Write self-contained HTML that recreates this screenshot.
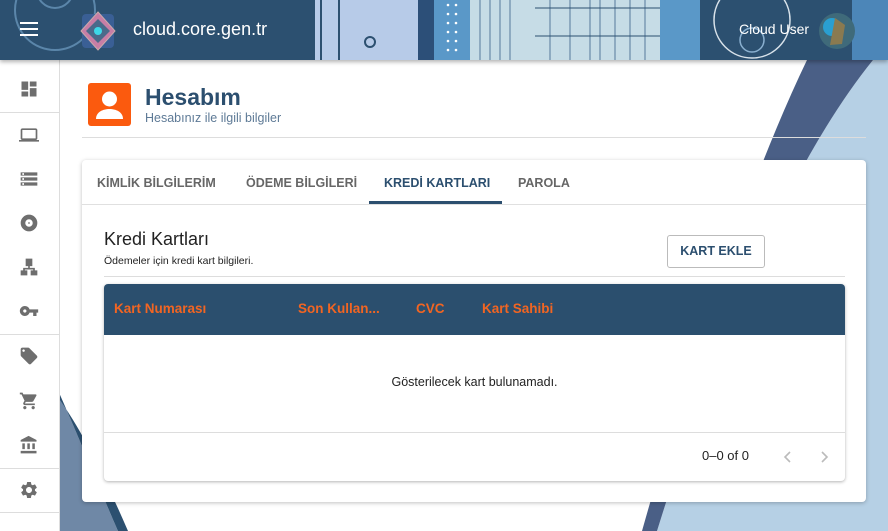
<!DOCTYPE html>
<html><head><meta charset="utf-8"><style>
*{box-sizing:border-box;margin:0;padding:0}
body{width:888px;height:531px;overflow:hidden;font-family:"Liberation Sans",sans-serif;background:#fff;position:relative}
.hdr{position:absolute;left:0;top:0;width:888px;height:60px;background:#2c5070;overflow:hidden;box-shadow:0 2px 4px rgba(0,0,0,.3);z-index:5}
.side{position:absolute;left:0;top:60px;width:60px;height:471px;background:#fff;border-right:1px solid #ddd;z-index:3}
.side svg{position:absolute;left:19px;width:20px;height:20px;fill:#6e6e6e}
.div{position:absolute;left:0;width:60px;height:1px;background:#ddd}
.ab{position:absolute}
.tab{position:absolute;top:16px;font-size:12.5px;font-weight:bold;color:#666}
</style></head><body>
<svg class="ab" style="left:0;top:0" width="888" height="531">
<path d="M873 60 L888 60 L888 531 L657 531 Q760 200 873 60Z" fill="#b6d0e5"/>
<path d="M807 60 L873 60 Q760 200 657 531 L642 531 Q730 220 807 60Z" fill="#4a5f86"/>
<path d="M60 395 C80 440 100 490 118 531 L60 531Z" fill="#6f88a6"/>
<path d="M60 395 C80 440 100 490 118 531 L128 531 C110 490 88 440 60 400Z" fill="#2c5070"/>
</svg>
<div class="hdr">
<svg width="888" height="60" style="position:absolute;left:0;top:0">
<circle cx="55" cy="10" r="40" fill="none" stroke="#5b86aa" stroke-width="2"/>
<circle cx="55" cy="-10" r="18" fill="none" stroke="#5b86aa" stroke-width="2"/>
<rect x="315" y="0" width="105" height="60" fill="#b7cbe8"/>
<rect x="320" y="0" width="2" height="60" fill="#2c5070"/>
<rect x="338" y="0" width="2" height="60" fill="#2c5070"/>
<rect x="418" y="0" width="16" height="60" fill="#2c4f78"/>
<circle cx="370" cy="42" r="5" fill="none" stroke="#2c5070" stroke-width="2"/>
<rect x="434" y="0" width="36" height="60" fill="#5a98c8"/>
<g fill="#fff"><circle cx="448" cy="5" r="1.3"/><circle cx="448" cy="14" r="1.3"/><circle cx="448" cy="23" r="1.3"/><circle cx="448" cy="32" r="1.3"/><circle cx="448" cy="41" r="1.3"/><circle cx="448" cy="50" r="1.3"/><circle cx="456" cy="5" r="1.3"/><circle cx="456" cy="14" r="1.3"/><circle cx="456" cy="23" r="1.3"/><circle cx="456" cy="32" r="1.3"/><circle cx="456" cy="41" r="1.3"/><circle cx="456" cy="50" r="1.3"/></g>
<rect x="470" y="0" width="190" height="60" fill="#c6dce6"/>
<g stroke="#6a8aa8" stroke-width="1.2"><path d="M480 0V60M490 0V60M500 0V60M510 0V60M550 0V60M570 0V60M590 0V60M600 0V60M615 0V60M630 0V60M645 0V60"/></g>
<path d="M535 8H665M535 36H665" stroke="#2c5070"/>
<rect x="660" y="0" width="40" height="60" fill="#5a98c8"/>
<rect x="700" y="0" width="188" height="60" fill="#2c5070"/>
<circle cx="752" cy="20" r="38" fill="none" stroke="#d8e2ea" stroke-width="1.5"/>
<circle cx="752" cy="40" r="12" fill="none" stroke="#8ab0d0" stroke-width="1.5"/>
<rect x="852" y="0" width="36" height="60" fill="#4c86b8"/>
<circle cx="837" cy="31" r="18" fill="#3f6a7a"/>
<circle cx="832" cy="27" r="9" fill="#2a9fd0"/>
<path d="M835 18 L845 25 L842 44 L830 45Z" fill="#8a7a50"/>
</svg>
<svg class="ab" style="left:20px;top:22px" width="18" height="14"><path d="M0 1h18M0 7h18M0 13h18" stroke="#fff" stroke-width="2"/></svg>
<svg class="ab" style="left:80px;top:11px" width="36" height="40"><rect x="2" y="3" width="32" height="34" rx="4" fill="#3a5f95"/><path d="M18 1 L35 20 L18 39 L1 20Z" fill="#c87ea6" stroke="#caa" stroke-width="1"/><path d="M18 8 L30 20 L18 32 L6 20Z" fill="#4a6a8a"/><circle cx="18" cy="20" r="4" fill="#3dd8e8"/></svg>
<div class="ab" style="left:133px;top:19px;color:#fff;font-size:18px">cloud.core.gen.tr</div>
<div class="ab" style="left:739px;top:21px;color:#fff;font-size:14px">Cloud User</div>
</div>
<div class="side">
<svg style="top:19px" viewBox="0 0 24 24"><path d="M3 13h8V3H3v10zm0 8h8v-6H3v6zm10 0h8V11h-8v10zm0-18v6h8V3h-8z"/></svg>
<div class="div" style="top:52px"></div>
<svg style="top:65px" viewBox="0 0 24 24"><path d="M20 18c1.1 0 2-.9 2-2V6c0-1.1-.9-2-2-2H4c-1.1 0-2 .9-2 2v10c0 1.1.9 2 2 2H0v2h24v-2h-4zM4 6h16v10H4V6z"/></svg>
<svg style="top:109px" viewBox="0 0 24 24"><path d="M2 20h20v-4H2v4zm2-3h2v2H4v-2zM2 4v4h20V4H2zm4 3H4V5h2v2zm-4 7h20v-4H2v4zm2-3h2v2H4v-2z"/></svg>
<svg style="top:153px" viewBox="0 0 24 24"><path fill-rule="evenodd" d="M12 2a10 10 0 1 0 0 20a10 10 0 1 0 0-20zM12 7.5a4.5 4.5 0 1 0 0 9a4.5 4.5 0 1 0 0-9zM12 11a1 1 0 1 1 0 2a1 1 0 1 1 0-2z"/></svg>
<svg style="top:197px" viewBox="0 0 24 24"><path d="M22 22v-6h-3v-3h-6v-2h3V2H8v9h3v2H5v3H2v6h8v-6H7v-1h10v1h-3v6z"/></svg>
<svg style="top:241px" viewBox="0 0 24 24"><path d="M12.65 10A5.99 5.99 0 0 0 7 6c-3.31 0-6 2.69-6 6s2.69 6 6 6a5.99 5.99 0 0 0 5.65-4H17v4h4v-4h2v-4H12.65zM7 14c-1.1 0-2-.9-2-2s.9-2 2-2 2 .9 2 2-.9 2-2 2z"/></svg>
<div class="div" style="top:274px"></div>
<svg style="top:286px" viewBox="0 0 24 24"><path d="M21.41 11.58l-9-9C12.05 2.22 11.55 2 11 2H4c-1.1 0-2 .9-2 2v7c0 .55.22 1.05.59 1.42l9 9c.36.36.86.58 1.41.58.55 0 1.05-.22 1.41-.59l7-7c.37-.36.59-.86.59-1.41 0-.55-.23-1.06-.59-1.42zM5.5 7C4.67 7 4 6.33 4 5.5S4.67 4 5.5 4 7 4.67 7 5.5 6.33 7 5.5 7z"/></svg>
<svg style="top:331px" viewBox="0 0 24 24"><path d="M7 18c-1.1 0-1.99.9-1.99 2S5.9 22 7 22s2-.9 2-2-.9-2-2-2zM1 2v2h2l3.6 7.59-1.35 2.45c-.16.28-.25.61-.25.96 0 1.1.9 2 2 2h12v-2H7.42c-.14 0-.25-.11-.25-.25l.03-.12.9-1.63h7.45c.75 0 1.41-.41 1.75-1.03l3.58-6.49A1 1 0 0 0 20 4H5.21l-.94-2H1zm16 16c-1.1 0-1.99.9-1.99 2s.89 2 1.99 2 2-.9 2-2-.9-2-2-2z"/></svg>
<svg style="top:375px" viewBox="0 0 24 24"><path d="M4 10v7h3v-7H4zm6 0v7h3v-7h-3zM2 22h19v-3H2v3zm14-12v7h3v-7h-3zm-4.5-9L2 6v2h19V6l-9.5-5z"/></svg>
<div class="div" style="top:408px"></div>
<svg style="top:420px" viewBox="0 0 24 24"><path d="M19.14 12.94c.04-.3.06-.61.06-.94 0-.32-.02-.64-.07-.94l2.03-1.58a.49.49 0 0 0 .12-.61l-1.92-3.32a.49.49 0 0 0-.59-.22l-2.39.96c-.5-.38-1.03-.7-1.62-.94l-.36-2.54a.48.48 0 0 0-.48-.41h-3.84c-.24 0-.43.17-.47.41l-.36 2.54c-.59.24-1.13.57-1.62.94l-2.39-.96a.48.48 0 0 0-.59.22L2.74 8.87c-.12.21-.08.47.12.61l2.03 1.58c-.05.3-.09.63-.09.94s.02.64.07.94l-2.03 1.58a.49.49 0 0 0-.12.61l1.92 3.32c.12.22.37.29.59.22l2.39-.96c.5.38 1.03.7 1.62.94l.36 2.54c.05.24.24.41.48.41h3.84c.24 0 .44-.17.47-.41l.36-2.54c.59-.24 1.13-.56 1.62-.94l2.39.96c.22.08.47 0 .59-.22l1.92-3.32c.12-.22.07-.47-.12-.61l-2.01-1.58zM12 15.6c-1.98 0-3.6-1.62-3.6-3.6s1.62-3.6 3.6-3.6 3.6 1.62 3.6 3.6-1.62 3.6-3.6 3.6z"/></svg>
<div class="div" style="top:452px"></div>
</div>

<div class="ab" style="left:88px;top:83px;width:43px;height:43px;background:#fb5a0e;border-radius:3px;z-index:2">
<svg width="43" height="43" viewBox="0 0 43 43"><circle cx="21.5" cy="16" r="7.5" fill="#fff"/><path d="M8 36c0-7 7-10 13.5-10S35 29 35 36z" fill="#fff"/></svg></div>
<div class="ab" style="left:145px;top:84px;font-size:23px;font-weight:bold;color:#2c4f6f;z-index:2">Hesabım</div>
<div class="ab" style="left:145px;top:111px;font-size:12.5px;color:#5e7a96;z-index:2">Hesabınız ile ilgili bilgiler</div>
<div class="ab" style="left:82px;top:137px;width:784px;height:1px;background:#ddd;z-index:2"></div>

<div class="ab" style="left:82px;top:160px;width:784px;height:342px;background:#fff;border-radius:4px;box-shadow:0 1px 4px rgba(0,0,0,.25);z-index:2">
<div style="position:absolute;left:0;top:44px;width:784px;height:1px;background:#e0e0e0"></div>
<div class="tab" style="left:15px">KİMLİK BİLGİLERİM</div>
<div class="tab" style="left:164px">ÖDEME BİLGİLERİ</div>
<div class="tab" style="left:302px;color:#2c4f6f">KREDİ KARTLARI</div>
<div class="tab" style="left:436px">PAROLA</div>
<div style="position:absolute;left:287px;top:41px;width:133px;height:3px;background:#2c4f6f"></div>
<div style="position:absolute;left:22px;top:69px;font-size:18px;color:#222;font-weight:300">Kredi Kartları</div>
<div style="position:absolute;left:22px;top:95px;font-size:10.5px;color:#222">Ödemeler için kredi kart bilgileri.</div>
<div style="position:absolute;left:585px;top:75px;width:98px;height:33px;border:1px solid #bbb;border-radius:3px;font-size:12.5px;font-weight:bold;color:#2c4f6f;text-align:center;line-height:31px">KART EKLE</div>
<div style="position:absolute;left:22px;top:116px;width:741px;height:1px;background:#ddd"></div>
<div style="position:absolute;left:22px;top:124px;width:741px;height:197px;border-radius:4px;box-shadow:0 1px 3px rgba(0,0,0,.3);background:#fff;overflow:hidden">
<div style="height:51px;background:#2b4f6e;position:relative;font-size:13.5px;font-weight:bold;color:#f26522">
<span style="position:absolute;left:10px;top:17px">Kart Numarası</span>
<span style="position:absolute;left:194px;top:17px">Son Kullan...</span>
<span style="position:absolute;left:312px;top:17px">CVC</span>
<span style="position:absolute;left:378px;top:17px">Kart Sahibi</span></div>
<div style="position:absolute;top:91px;width:741px;text-align:center;font-size:12.5px;color:#222">Gösterilecek kart bulunamadı.</div>
<div style="position:absolute;top:148px;width:741px;height:1px;background:#ddd"></div>
<div style="position:absolute;top:164px;left:598px;font-size:13px;color:#222">0–0 of 0</div>
<svg style="position:absolute;left:678px;top:166px" width="12" height="14"><path d="M8 2L3 7l5 5" fill="none" stroke="#bbb" stroke-width="1.6"/></svg>
<svg style="position:absolute;left:714px;top:166px" width="12" height="14"><path d="M4 2l5 5-5 5" fill="none" stroke="#bbb" stroke-width="1.6"/></svg>
</div>
</div>
</body></html>
